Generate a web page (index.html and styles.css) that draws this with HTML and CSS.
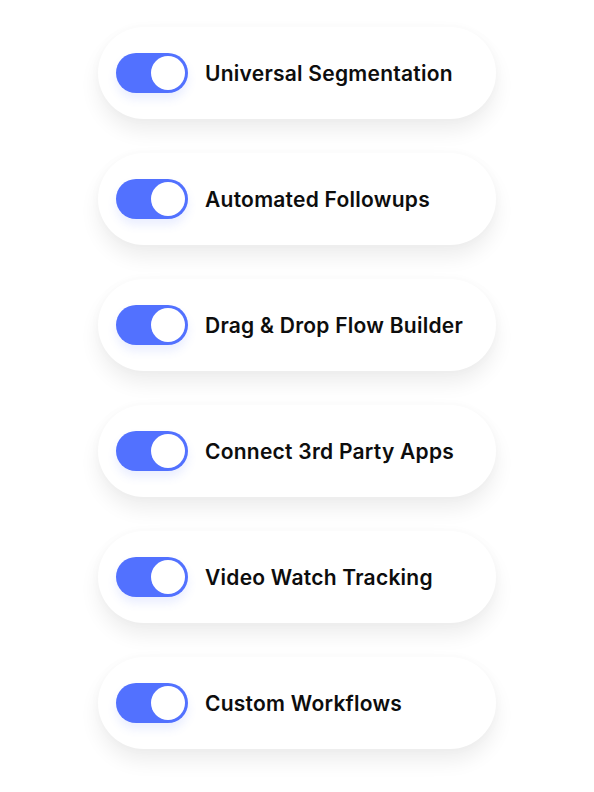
FILE: index.html
```html
<!DOCTYPE html>
<html lang="en">
<head>
    <meta charset="UTF-8">
    <meta name="viewport" content="width=device-width, initial-scale=1.0">
    <title>Features</title>
    <link rel="stylesheet" href="styles.css">
</head>
<body>
    <div class="features">
        <div class="feature">
            <span class="toggle"><span class="knob"></span></span>
            <span class="label">Universal Segmentation</span>
        </div>
        <div class="feature">
            <span class="toggle"><span class="knob"></span></span>
            <span class="label">Automated Followups</span>
        </div>
        <div class="feature">
            <span class="toggle"><span class="knob"></span></span>
            <span class="label">Drag &amp; Drop Flow Builder</span>
        </div>
        <div class="feature">
            <span class="toggle"><span class="knob"></span></span>
            <span class="label">Connect 3rd Party Apps</span>
        </div>
        <div class="feature">
            <span class="toggle"><span class="knob"></span></span>
            <span class="label">Video Watch Tracking</span>
        </div>
        <div class="feature">
            <span class="toggle"><span class="knob"></span></span>
            <span class="label">Custom Workflows</span>
        </div>
    </div>
</body>
</html>
```

FILE: styles.css
```css
body {
    margin: 0;
    background-color: #fff;
    font-family: Inter, "Noto Sans", sans-serif;
}
.features {
    display: flex;
    flex-direction: column;
    align-items: center;
    gap: 34px;
    padding: 27px 0 43px;
}
.feature {
    width: 398px;
    height: 92px;
    box-sizing: border-box;
    padding-left: 18px;
    display: flex;
    align-items: center;
    gap: 17px;
    background-color: #fff;
    border-radius: 46px;
    box-shadow: 0 12px 20px rgba(0,0,0,0.07), 0 0 12px rgba(0,0,0,0.025);
}
.toggle {
    width: 72px;
    height: 40px;
    box-sizing: border-box;
    padding: 3px;
    border-radius: 20px;
    background-color: #5271ff;
    display: flex;
    justify-content: flex-end;
    box-shadow: 0 6px 10px rgba(82,113,255,0.12);
}
.knob {
    width: 34px;
    height: 34px;
    border-radius: 50%;
    background-color: #fff;
}
.label {
    font-size: 21px;
    font-weight: 600;
    color: #0d0d0d;
    letter-spacing: 0.25px;
}
```
